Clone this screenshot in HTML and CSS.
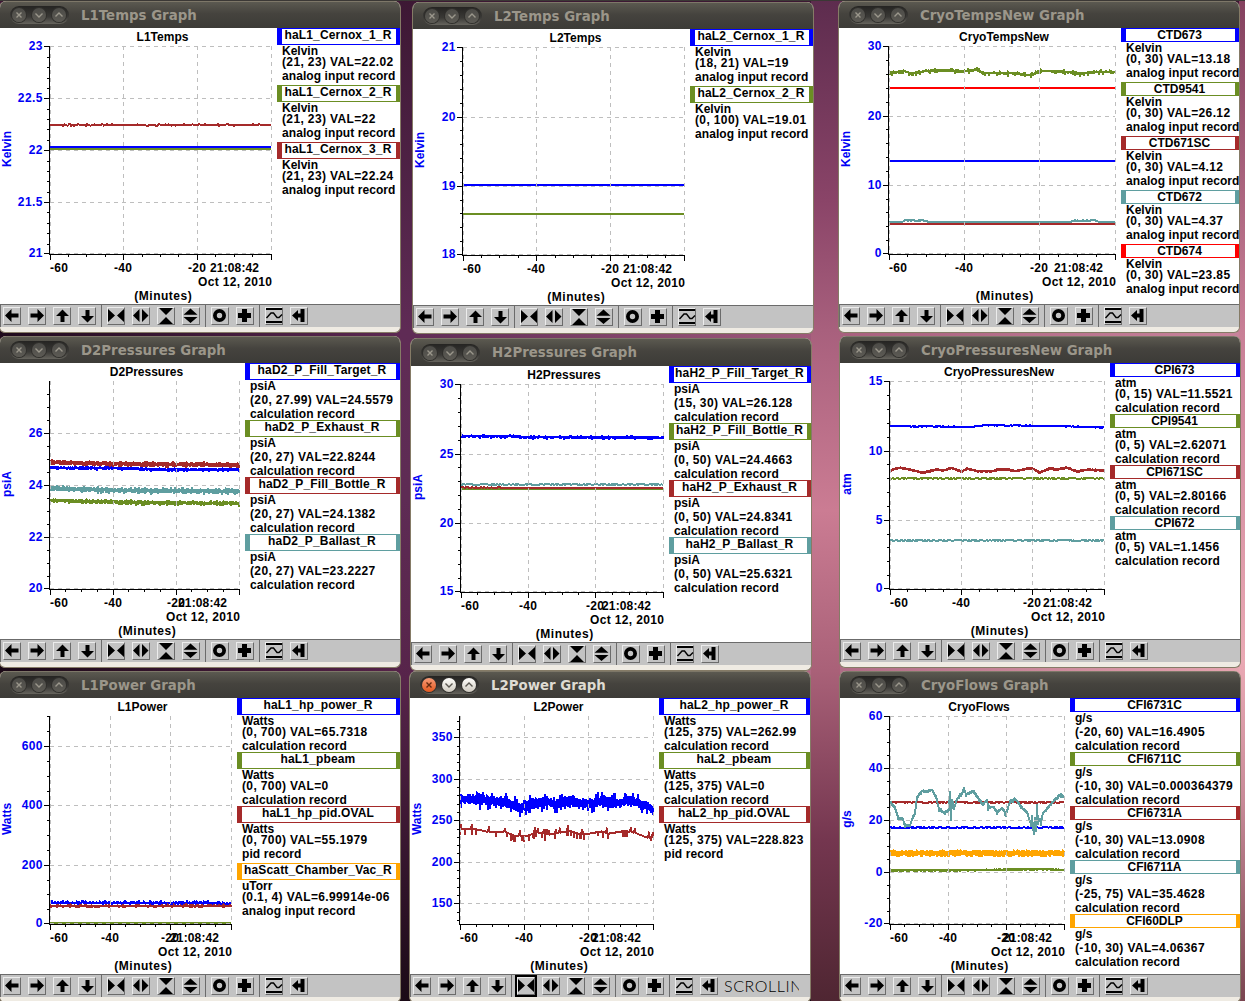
FILE: index.html
```html
<!DOCTYPE html>
<html lang="en">
<head>
<meta charset="utf-8">
<title>Strip charts</title>
<link rel="stylesheet" href="styles.css">
</head>
<body>
<main class="desktop" id="desktop"></main>
<script src="charts.js"></script>
</body>
</html>
```

FILE: styles.css
```css
* { box-sizing: border-box; }

body {
  margin: 0;
  overflow: hidden;
  font: bold 12px/1 "Liberation Sans", Arial, sans-serif;
  color: #000;
}

.desktop {
  position: relative;
  width: 1245px;
  height: 1001px;
  overflow: hidden;
  background:
    linear-gradient(#3b3835, #3b3835) 0 0 / 100% 1px no-repeat,
    linear-gradient(#84415f, #c87f96 33%, #eaa9b4 66%, #c88a98 80%, #7a4550) 100% 0 / 6px 100% no-repeat,
    linear-gradient(90deg, #a8607e, #c8839b) 840px 325px / 400px 14px no-repeat,
    linear-gradient(90deg, #b06d86, #e6a5b0) 840px 660px / 400px 14px no-repeat,
    linear-gradient(#5d2c4e, #8a4468 20%, #a8607d 33%, #cb7c93 51%, #a96178 67%, #74364f 84%, #4f2632) 811px 0 / 40px 100% no-repeat,
    linear-gradient(90deg, #5f2b55, #a05a7c) 412px 325px / 400px 20px no-repeat,
    linear-gradient(90deg, #5a2850, #b06a84) 412px 660px / 400px 20px no-repeat,
    linear-gradient(90deg, #200a1c, #5c2852) 0 325px / 400px 20px no-repeat,
    linear-gradient(90deg, #1a0815, #562349) 0 660px / 400px 20px no-repeat,
    linear-gradient(#3d1834, #5f2b55 33%, #5e2b54 50%, #57244a 68%, #1b0a16);
}

/* window frame */
.window {
  position: absolute;
  display: flex;
  flex-direction: column;
  width: 402px;
  height: 332px;
  border: 1px solid #857b66;
  border-top: 0;
  border-radius: 7px 7px 6px 6px;
  background: #efebe3;
  overflow: hidden;
}
.titlebar {
  flex: none;
  display: flex;
  align-items: center;
  gap: 12px;
  height: 27px;
  padding-top: 1px;
  padding-left: 10px;
  border-top: 1px solid #7d7768;
  background: linear-gradient(#5b5950, #45433e 45%, #3c3b37);
  color: #9b968a;
  font: bold 13.33px/1 "DejaVu Sans", sans-serif;
}
.window.tall .titlebar { height: 28px; }
.window.tall { height: 333px; }
.controls {
  display: flex;
  align-items: center;
  gap: 6px;
  width: 59px;
  height: 18px;
  margin-bottom: 1px;
  padding: 0 2px;
  border-radius: 9px;
  background: linear-gradient(#252422, #3a3936 60%, #66645d);
}
.control {
  width: 14px;
  height: 14px;
  border-radius: 50%;
  background: linear-gradient(#4c4b47, #5c5a54);
  box-shadow: 0 0 0 1px #302f2c;
  stroke: #9b978c;
}
.window.active .titlebar { color: #dfdbd2; }
.window.active .control {
  background: linear-gradient(#fffefb, #cfcac0);
  stroke: #5a5750;
}
.window.active .control.close {
  background: linear-gradient(#f79b77, #e4581f);
  stroke: #64290f;
}
.control svg { display: block; fill: none; stroke-width: 1.4; }

.body {
  flex: none;
  display: flex;
  height: 276px;
  background: #fff;
}

/* plot */
.plot { flex: none; display: block; overflow: visible; }
.plot .axis { fill: none; stroke: #000; shape-rendering: crispEdges; }
.plot .grid { fill: none; stroke: #bebebe; stroke-dasharray: 4 4; shape-rendering: crispEdges; }
.plot .trace { fill: none; stroke-width: 2; shape-rendering: crispEdges; }
.plot .trace.band { stroke-linejoin: bevel; }
.plot .label { fill: #0000f5; }
.plot .end { text-anchor: end; }
.plot .mid { text-anchor: middle; }

/* legend */
.legend { flex: 1; min-width: 0; overflow: hidden; }
.name {
  height: 14px;
  border: solid;
  border-width: 1px 4px 1px 5px;
  text-align: center;
  line-height: 12px;
  white-space: nowrap;
}
.name.under { height: 17px; letter-spacing: .15px; }
.name span { display: block; margin: 0 -5px 0 -7px; }
.line {
  height: 11px;
  padding-left: 5px;
  line-height: 13px;
  white-space: pre;
}
.line.deep { height: 14px; }
.line.desc { letter-spacing: .08px; }
.line.last { height: 12px; }
.line.last.deep { height: 15px; }
.line.value { letter-spacing: .37px; }
.c-blue { color: #0000ff; }
.c-green { color: #6b8e23; }
.c-brown { color: #a52a2a; }
.c-teal { color: #5f9ea0; }
.c-orange { color: #ffa500; }
.c-red { color: #ff0000; }
.name span { color: #000; }

/* toolbar */
.toolbar {
  flex: none;
  display: flex;
  gap: 7px;
  height: 23px;
  padding: 2px 8px 0 2px;
  border-top: 1px solid #6b6b6b;
  border-left: 1px solid #6b6b6b;
  background: #c3c3c3;
}
.tool {
  flex: none;
  width: 18px;
  height: 18px;
  border: 1px solid;
  border-color: #ececec #6b6b6b #6b6b6b #ececec;
}
.tool svg { display: block; margin: -1px; }
.tool.selected { outline: 2px solid #000; }
.sep {
  flex: none;
  width: 1px;
  margin: -2px -2px 0;
  background: #6b6b6b;
}
.status {
  flex: none;
  width: 75px;
  margin-left: -1px;
  overflow: hidden;
  font: 300 16px/18px Lato, "Liberation Sans", sans-serif;
  letter-spacing: .6px;
  white-space: nowrap;
}
```

FILE: charts.js
```js
const COLORS = { blue: '#0000ff', green: '#6b8e23', brown: '#a52a2a', teal: '#5f9ea0', orange: '#ffa500', red: '#ff0000' };
const TOP = 18, BOTTOM = 225.5, LEFT = 50;

// Trace: [colour, level or [[x, y], ...], noise, spike]
const CHARTS = [
  { name: 'L1Temps', x: -1, y: 1, right: 271, unit: 'Kelvin', range: [21, 23], major: .5, minor: 5,
    traces: [['brown', 97, .7], ['green', 121, .3], ['blue', 119, 0]],
    legend: [['blue', 'haL1_Cernox_1_R', '(21, 23) VAL=22.02', 'analog input record'],
      ['green', 'haL1_Cernox_2_R', '(21, 23) VAL=22', 'analog input record'],
      ['brown', 'haL1_Cernox_3_R', '(21, 23) VAL=22.24', 'analog input record']] },
  { name: 'L2Temps', x: 412, y: 2, right: 271, unit: 'Kelvin', range: [18, 21], major: 1, minor: 5,
    traces: [['blue', 156, 0], ['green', 185, 0]],
    legend: [['blue', 'haL2_Cernox_1_R', '(18, 21) VAL=19', 'analog input record'],
      ['green', 'haL2_Cernox_2_R', '(0, 100) VAL=19.01', 'analog input record']] },
  { name: 'CryoTempsNew', x: 838, y: 1, right: 276, unit: 'Kelvin', range: [0, 30], major: 10, minor: 5, legendX: 282,
    traces: [['green', [[50, 46], [65, 43], [72, 45.5], [79, 45], [88, 43], [108, 42.5], [124, 44], [138, 41.5], [143, 45], [158, 45.5], [178, 45.5], [190, 47.5], [204, 43], [224, 44], [241, 46], [255, 44], [276, 44.5]], 1.2, 3],
      ['red', 60, 0], ['blue', 133, .5],
      ['teal', [[50, 194], [63, 194], [66, 192.5], [87, 192.5], [90, 194], [231, 194], [236, 192.5], [256, 192.5], [262, 194], [276, 194]], .4], ['brown', 196, 0]],
    legend: [['blue', 'CTD673', '(0, 30) VAL=13.18', 'analog input record'],
      ['green', 'CTD9541', '(0, 30) VAL=26.12', 'analog input record'],
      ['brown', 'CTD671SC', '(0, 30) VAL=4.12', 'analog input record'],
      ['teal', 'CTD672', '(0, 30) VAL=4.37', 'analog input record'],
      ['red', 'CTD674', '(0, 30) VAL=23.85', 'analog input record']] },
  { name: 'D2Pressures', x: -1, y: 336, right: 239, unit: 'psiA', range: [20, 27.99], major: 2, minor: 4, legendX: 245,
    traces: [['blue', [[50, 105], [120, 105.5], [165, 107], [239, 107]], 1.5, 2.2], ['brown', [[50, 99.5], [120, 101], [239, 102]], 2.4, 3.6],
      ['teal', [[50, 125.5], [120, 127.5], [239, 128.5]], 2.6, 4], ['green', [[50, 137.5], [120, 139.5], [239, 140.5]], 2.1, 3.3]],
    legend: [['blue', 'haD2_P_Fill_Target_R', '(20, 27.99) VAL=24.5579', 'calculation record'],
      ['green', 'haD2_P_Exhaust_R', '(20, 27) VAL=22.8244', 'calculation record'],
      ['brown', 'haD2_P_Fill_Bottle_R', '(20, 27) VAL=24.1382', 'calculation record'],
      ['teal', 'haD2_P_Ballast_R', '(20, 27) VAL=23.2227', 'calculation record']] },
  { name: 'H2Pressures', x: 410, y: 338, tall: true, right: 252, unit: 'psiA', range: [15, 30], major: 5, minor: 5, legendX: 258,
    traces: [['blue', [[50, 70.5], [100, 70.5], [115, 71.5], [252, 72]], 1.2, 2.4], ['teal', 118.4, .5],
      ['green', 123, 0], ['brown', [[50, 121.5], [115, 121.7], [125, 122], [252, 122]], .2]],
    legend: [['blue', 'haH2_P_Fill_Target_R', '(15, 30) VAL=26.128', 'calculation record'],
      ['green', 'haH2_P_Fill_Bottle_R', '(0, 50) VAL=24.4663', 'calculation record'],
      ['brown', 'haH2_P_Exhaust_R', '(0, 50) VAL=24.8341', 'calculation record'],
      ['teal', 'haH2_P_Ballast_R', '(0, 50) VAL=25.6321', 'calculation record']] },
  { name: 'CryoPressuresNew', x: 839, y: 336, right: 264, unit: 'atm', range: [0, 15], major: 5, minor: 5, legendX: 270,
    traces: [['blue', [[50, 63], [130, 64], [145, 62.3], [190, 62.6], [240, 63.8], [264, 64.5]], .5],
      ['brown', [[50, 107.5], [60, 105], [72, 107.3], [83, 110], [97, 106.5], [103, 108], [111, 105], [122, 109], [127, 106], [137, 108.3], [153, 108.3], [158, 106.5], [170, 107.2], [176, 108.5], [187, 105.7], [193, 106], [200, 110], [210, 105.3], [217, 107], [227, 104.7], [237, 108.8], [247, 107], [264, 107.7]], 1.4],
      ['green', 115.4, .6], ['teal', 177.4, .6]],
    legend: [['blue', 'CPI673', '(0, 15) VAL=11.5521', 'calculation record'],
      ['green', 'CPI9541', '(0, 5) VAL=2.62071', 'calculation record'],
      ['brown', 'CPI671SC', '(0, 5) VAL=2.80166', 'calculation record'],
      ['teal', 'CPI672', '(0, 5) VAL=1.1456', 'calculation record']] },
  { name: 'L1Power', x: -1, y: 671, right: 231, unit: 'Watts', range: [0, 700], major: 200, minor: 4, legendX: 237,
    traces: [['blue', [[50, 205], [210, 205], [228, 206.5], [231, 205]], .9, 2.8], ['brown', 208, .8, 2.4], ['green', 225, 0]],
    legend: [['blue', 'haL1_hp_power_R', '(0, 700) VAL=65.7318', 'calculation record'],
      ['green', 'haL1_pbeam', '(0, 700) VAL=0', 'calculation record'],
      ['brown', 'haL1_hp_pid.OVAL', '(0, 700) VAL=55.1979', 'pid record'],
      ['orange', 'haScatt_Chamber_Vac_R', '(0.1, 4) VAL=6.99914e-06', 'analog input record', 'uTorr']] },
  { name: 'L2Power', x: 409, y: 671, active: true, right: 243, unit: 'Watts', range: [125, 375], major: 50, minor: 5, legendX: 249,
    traces: [['blue', [[50, 101], [78, 102], [95, 104.5], [112, 110], [122, 106], [136, 103], [145, 107], [160, 102], [172, 105], [182, 105.5], [192, 102], [202, 105], [220, 103], [230, 105], [243, 111]], 5.5, 10],
      ['brown', [[50, 131.5], [65, 131], [80, 134.5], [95, 134], [105, 138], [118, 138], [126, 134], [138, 137], [160, 133], [172, 137], [192, 133.5], [198, 136], [215, 133], [225, 135], [238, 140], [243, 139]], .4, 6.5]],
    legend: [['blue', 'haL2_hp_power_R', '(125, 375) VAL=262.99', 'calculation record'],
      ['green', 'haL2_pbeam', '(125, 375) VAL=0', 'calculation record'],
      ['brown', 'haL2_hp_pid.OVAL', '(125, 375) VAL=228.823', 'pid record']] },
  { name: 'CryoFlows', x: 839, y: 671, right: 224, unit: 'g/s', range: [-20, 60], major: 20, minor: 4, legendX: 230,
    traces: [['brown', 104.4, .6], ['blue', 129.6, .7],
      ['teal', [[50, 104], [55, 110], [58, 120], [63, 122], [65, 128], [70, 128], [73, 119], [75, 116], [77, 100], [82, 93], [87, 94], [92, 92], [96, 99], [99, 112], [105, 115], [109, 112], [110, 94], [111, 122], [112, 102], [114, 111], [117, 102], [123, 94], [124, 91], [126, 97], [133, 93], [138, 100], [143, 107], [147, 102], [148, 110], [153, 109], [157, 115], [162, 110], [166, 117], [170, 104], [175, 101], [182, 110], [187, 115], [191, 127], [192, 118], [193, 131], [194, 136], [195, 120], [196, 133], [197, 107], [198, 126], [200, 121], [201, 127], [203, 115], [208, 110], [213, 104], [220, 97], [224, 99]], 1.6, 2.6],
      ['orange', 155.3, 3.6], ['green', [[50, 172.6], [140, 172.3], [200, 171.3], [224, 172.3]], 1.2]],
    legend: [['blue', 'CFI6731C', '(-20, 60) VAL=16.4905', 'calculation record'],
      ['green', 'CFI6711C', '(-10, 30) VAL=0.000364379', 'calculation record'],
      ['brown', 'CFI6731A', '(-10, 30) VAL=13.0908', 'calculation record'],
      ['teal', 'CFI6711A', '(-25, 75) VAL=35.4628', 'calculation record'],
      ['orange', 'CFI60DLP', '(-10, 30) VAL=4.06367', 'calculation record']] },
];

const ICONS = [
  '<path d="M1.500 8 8 1.500V6h7v4H8v4.500Z"/>',
  '<path d="M15.500 8 9 1.500V6H2v4h7v4.500Z"/>',
  '<path d="M9 2 15.500 8.500H11V14.500H7V8.500H2.500Z"/>',
  '<path d="M9 15 2.500 8.500H7V2.500h4v6h4.500Z"/>',
  '|',
  '<path d="M.5 1.500 7.500 8 .5 14.500ZM16.500 1.500 9.500 8l7 6.500Z"/>',
  '<path d="M.5 8 7 1.500v13ZM16 8 9.500 1.500v13Z"/>',
  '<path d="M1.500 .5H15.500L8.500 7.500ZM1.500 16.500H15.500L8.500 9.500Z"/>',
  '<path d="M8 1 15 7.200H1ZM8 15.500 15 9.500H1Z"/>',
  '|',
  '<circle cx="8" cy="8" r="4.600" fill="none" stroke="#000" stroke-width="3.800"/>',
  '<path d="M5.500 1.500h5V5.500h4v5h-4v4h-5v-4H1.500v-5h4Z"/>',
  '|',
  '<path d="M.5 .5h16v2H.5ZM.5 13.500h16v2H.5Z"/><path d="M1 10.500 5.500 5.500h2.500L11.500 10H13.500L16.500 7" fill="none" stroke="#000" stroke-width="1.400"/>',
  '<path d="M1.500 8 7.500 2.500V6h2.500V1.500H14v13h-4V10H7.500v3.500Z"/>',
];

// Deterministic noise so that every load draws the same traces.
function random(seed) {
  let s = seed;
  return () => {
    s = (s * 1664525 + 1013904223) >>> 0;
    return s / 4294967296;
  };
}

function levelAt(level, x) {
  if (typeof level === 'number') return level;
  const i = level.findIndex(p => p[0] >= x);
  if (i === 0) return level[0][1];
  if (i < 0) return level[level.length - 1][1];
  const [x0, y0] = level[i - 1], [x1, y1] = level[i];
  return y0 + (y1 - y0) * (x - x0) / (x1 - x0);
}

function trace([color, level, noise, spike], right, seed) {
  const rnd = random(seed);
  const band = noise >= .8 || spike;
  let d = '';
  const add = (x, y) => { d += (d ? 'L' : 'M') + x + ' ' + y.toFixed(1); };
  for (let x = LEFT; x <= right; x += 1) {
    const y = levelAt(level, x);
    if (!band) {
      add(x, y + (rnd() * 2 - 1) * noise);
      continue;
    }
    let up = (.4 + .6 * rnd()) * noise, down = (.4 + .6 * rnd()) * noise;
    if (spike && rnd() < .16) up = (.6 + .4 * rnd()) * spike;
    if (spike && rnd() < .16) down = (.6 + .4 * rnd()) * spike;
    add(x, y - up);
    add(x, y + down);
    add(x, y);
  }
  return `<path class="trace${band ? ' band' : ''}" stroke="${COLORS[color]}" d="${d}"/>`;
}

function text(x, y, str, width, cls = '') {
  return `<text class="${cls}" x="${x}" y="${y}" textLength="${width}">${str}</text>`;
}

function plot(c, index) {
  const [min, max] = c.range, r = c.right;
  const yOf = v => Math.min(225, Math.ceil(TOP + (max - v) / (max - min) * (BOTTOM - TOP))) + .5;
  let axis = `M49.5 ${TOP}V226.5H${r + 1}`, grid = '', labels = '';
  const step = c.major / c.minor;
  for (let i = Math.ceil(min / step); i <= Math.floor(max / step + .001); i++) {
    const y = yOf(i * step), isMajor = i % c.minor === 0;
    axis += `M${isMajor ? 44 : 47} ${y}H49`;
    if (isMajor) {
      const s = String(i * step);
      const w = [...s].reduce((n, ch) => n + (ch === '.' ? 4 : ch === '-' ? 4.5 : 6.9), 0);
      grid += `M${LEFT} ${y}H${r}`;
      labels += text(42.5, y + 3.5, s, w, 'label end');
    }
  }
  for (let i = 0; i <= 12; i++) {
    const x = Math.floor(LEFT + (r - LEFT) * i / 12) + .5;
    axis += `M${x} 226V${i % 4 ? 229 : 232}`;
    if (i % 4 === 0) grid += `M${x} ${TOP}V226`;
  }
  const x1 = Math.floor(LEFT + (r - LEFT) / 3), x2 = Math.floor(LEFT + (r - LEFT) * 2 / 3);
  const mid = (LEFT + r) / 2 + 2;
  return `<svg class="plot" width="${c.legendX || 277}" height="276">
    ${c.traces.map((t, i) => trace(t, r, 97 * index + 13 * i + 5)).join('')}
    <path class="grid" d="${grid}"/><path class="axis" d="${axis}"/>${labels}
    <text class="mid" x="${mid}" y="13">${c.name}</text>
    <text class="label mid" transform="translate(11 121) rotate(-90)">${c.unit}</text>
    ${text(59, 244, '-60', 18, 'mid')}${text(x1, 244, '-40', 18, 'mid')}${text(x2, 244, '-20', 18, 'mid')}
    ${text(r - 12, 244, '21:08:42', 49, 'end')}
    ${text(r + 1, 258, 'Oct 12, 2010', 74, 'end')}
    ${text(mid + .5, 272, '(Minutes)', 57.5, 'mid')}</svg>`;
}

const deep = s => /[gpqyj(]/.test(s) ? ' deep' : '';

function legend(c) {
  return c.legend.map(([color, name, value, record, unit = c.unit]) => `
    <div class="name c-${color}${/_/.test(name) ? ' under' : ''}"><span>${name}</span></div>
    <div class="line${deep(unit)}">${unit}</div>
    <div class="line value deep">${value}</div>
    <div class="line desc last${deep(record)}">${record}</div>`).join('');
}

function toolbar(c) {
  return ICONS.map((icon, i) => icon === '|' ? '<i class="sep"></i>'
    : `<div class="tool${c.active && i === 5 ? ' selected' : ''}"><svg width="18" height="18" viewBox="-.5 -.5 18 18">${icon}</svg></div>`).join('')
    + (c.active ? '<div class="status">SCROLLING</div>' : '');
}

const control = (cls, d) => `<div class="control ${cls}"><svg width="14" height="14"><path d="${d}"/></svg></div>`;

document.getElementById('desktop').innerHTML = CHARTS.map((c, i) => `
  <section class="window${c.active ? ' active' : ''}${c.tall ? ' tall' : ''}" style="left:${c.x}px;top:${c.y}px">
    <header class="titlebar">
      <div class="controls">${control('close', 'M4.500 4.500l5 5M9.500 4.500l-5 5')}${control('', 'M3.500 5.500 7 9l3.500-3.500')}${control('', 'M3.500 8.500 7 5l3.500 3.500')}</div>
      <span>${c.name} Graph</span>
    </header>
    <div class="body">${plot(c, i + 1)}<div class="legend">${legend(c)}</div></div>
    <div class="toolbar">${toolbar(c)}</div>
  </section>`).join('');
```
